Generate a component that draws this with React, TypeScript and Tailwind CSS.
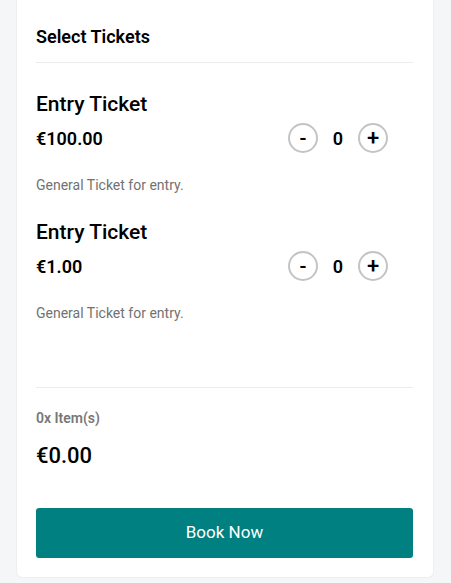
import { useState } from 'react';

type Ticket = {
  id: number;
  name: string;
  price: number;
  description: string;
};

const tickets: Ticket[] = [
  { id: 1, name: 'Entry Ticket', price: 100, description: 'General Ticket for entry.' },
  { id: 2, name: 'Entry Ticket', price: 1, description: 'General Ticket for entry.' },
];

const euro = (n: number) => `€${n.toFixed(2)}`;

function TicketRow({
  ticket,
  qty,
  onChange,
}: {
  ticket: Ticket;
  qty: number;
  onChange: (q: number) => void;
}) {
  return (
    <div className="mb-[23px]">
      <h3 className="text-[21px] leading-[28px] font-medium text-black">{ticket.name}</h3>
      <div className="mt-[5px] flex items-center justify-between pr-[25px]">
        <span className="text-[18px] font-semibold text-black">{euro(ticket.price)}</span>
        <div className="flex items-center">
          <button
            type="button"
            className="flex h-[30px] w-[30px] items-center justify-center rounded-full border-2 border-[#c4c4c4] bg-white text-[19px] font-bold leading-none text-black"
            onClick={() => onChange(Math.max(0, qty - 1))}
          >
            -
          </button>
          <span className="w-[40px] text-center text-[18px] font-semibold text-black">{qty}</span>
          <button
            type="button"
            className="flex h-[30px] w-[30px] items-center justify-center rounded-full border-2 border-[#c4c4c4] bg-white text-[22px] font-medium leading-none text-black"
            onClick={() => onChange(qty + 1)}
          >
            +
          </button>
        </div>
      </div>
      <p className="mt-[22px] text-[14px] leading-[20px] text-[#727272]">{ticket.description}</p>
    </div>
  );
}

export default function App() {
  const [qty, setQty] = useState<Record<number, number>>({});

  const count = tickets.reduce((s, t) => s + (qty[t.id] || 0), 0);
  const total = tickets.reduce((s, t) => s + (qty[t.id] || 0) * t.price, 0);

  return (
    <div
      className="min-h-screen bg-[#f5f6f8] px-[16px] pb-[5px]"
      style={{ fontFamily: 'Roboto, "Noto Sans", sans-serif' }}
    >
      <div className="w-[418px] rounded-b-[6px] border border-t-0 border-[#eceef1] bg-white pl-[19px] pr-[20px] pt-[23px] pb-[19px]">
        {/* Header */}
        <div className="border-b border-[#ececec] pb-[12px]">
          <h2 className="text-[18px] leading-[27px] font-semibold text-black">Select Tickets</h2>
        </div>

        {/* Tickets */}
        <div className="pt-[27px] h-[324px]">
          {tickets.map((t) => (
            <TicketRow
              key={t.id}
              ticket={t}
              qty={qty[t.id] || 0}
              onChange={(q) => setQty({ ...qty, [t.id]: q })}
            />
          ))}
        </div>

        {/* Summary */}
        <div className="border-t border-[#ececec] pt-[20px]">
          <p className="text-[14px] leading-[20px] font-semibold text-[#777777]">{count}x Item(s)</p>
          <p className="mt-[13px] text-[22px] leading-[30px] font-medium text-black">{euro(total)}</p>
          <button
            type="button"
            className="mt-[37px] h-[50px] w-full rounded-[3px] bg-[#008080] text-[17px] text-white"
          >
            Book Now
          </button>
        </div>
      </div>
    </div>
  );
}
